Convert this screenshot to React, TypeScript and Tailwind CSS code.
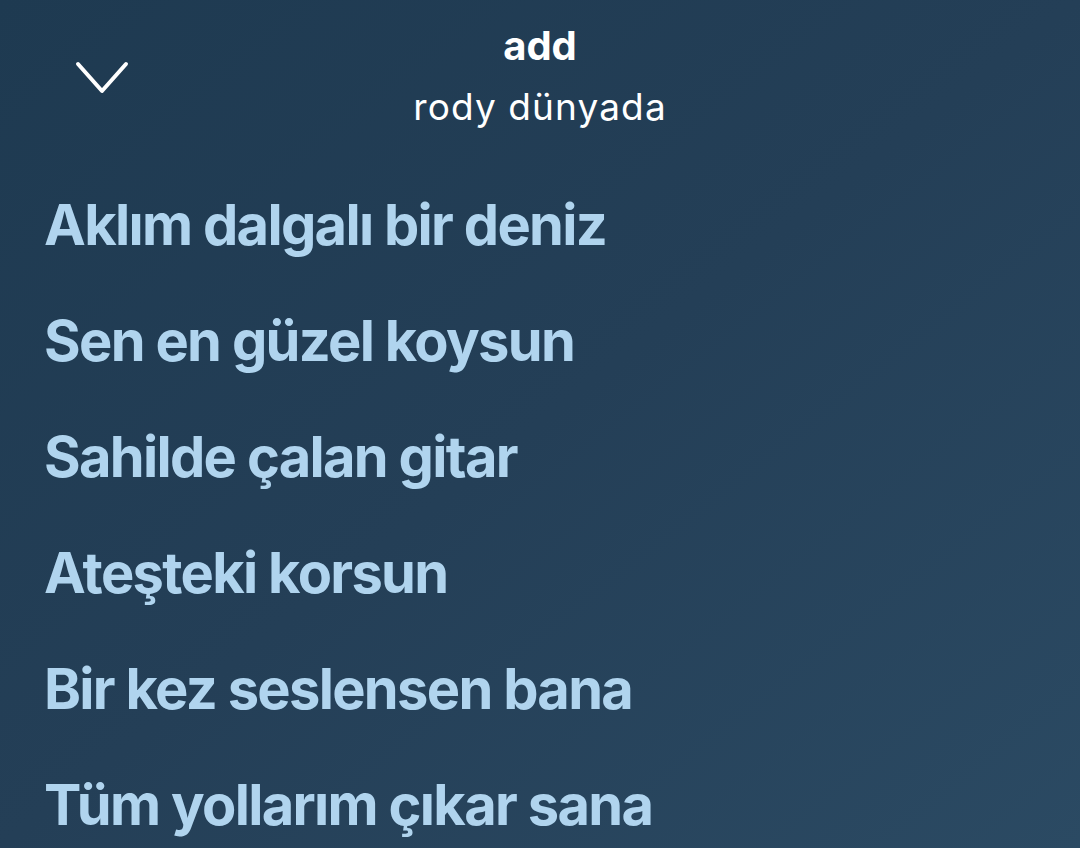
const lyrics = [
  "Aklım dalgalı bir deniz",
  "Sen en güzel koysun",
  "Sahilde çalan gitar",
  "Ateşteki korsun",
  "Bir kez seslensen bana",
  "Tüm yollarım çıkar sana",
];

export default function App() {
  return (
    <div
      className="h-[848px] w-[1080px] overflow-hidden bg-gradient-to-br from-[#1e3a51] via-[#243f57] to-[#2b4a63] text-white"
      style={{ fontFamily: "Inter, 'Noto Sans', sans-serif" }}
    >
      {/* Header */}
      <header className="relative flex h-[160px] flex-col items-center pt-[22px]">
        <button type="button" aria-label="Kapat" className="absolute left-[74px] top-[60px]">
          <svg width="56" height="36" viewBox="0 0 56 36" fill="none">
            <path d="M4 4 L28 31 L52 4" stroke="white" strokeWidth="4" strokeLinecap="round" strokeLinejoin="round" />
          </svg>
        </button>
        <div className="text-[40px] font-bold leading-[48px]">add</div>
        <div className="mt-[11px] text-[37px] leading-[52px] tracking-[0.03em]">rody dünyada</div>
      </header>

      {/* Lyrics */}
      <div className="flex flex-col gap-[48px] px-[44px] pt-[31px]">
        {lyrics.map((line) => (
          <p key={line} className="text-[56px] font-bold leading-[68px] tracking-[-0.03em] text-[#b0d4ee]">
            {line}
          </p>
        ))}
      </div>
    </div>
  );
}
